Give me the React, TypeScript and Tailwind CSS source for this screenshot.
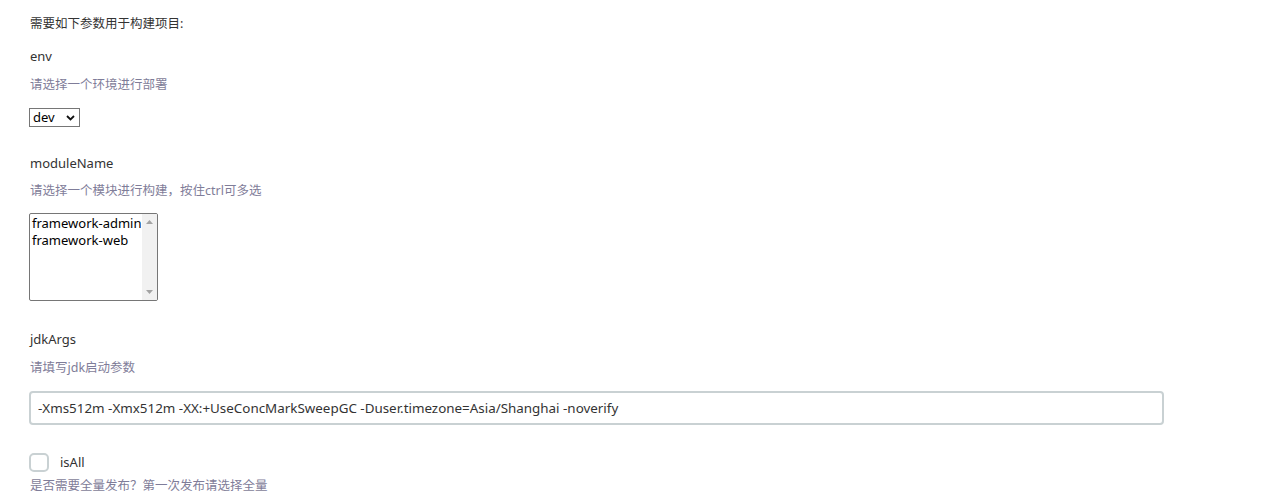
import { useState } from 'react';

const font = { fontFamily: '"Noto Sans", "Noto Sans CJK SC", sans-serif' };

export default function App() {
  const [isAll, setIsAll] = useState(false);

  return (
    <div className="min-h-[504px] bg-white pl-[30px] pt-[15px] text-[#333]" style={font}>
      <div className="text-[12.5px] leading-[18px]">需要如下参数用于构建项目:</div>

      {/* env */}
      <div className="mt-[13px] text-[13px] leading-[20px]">env</div>
      <div className="mt-[10px] text-[12.5px] leading-[18px] text-[#7f7d99]">请选择一个环境进行部署</div>
      <div className="mt-[14px] -ml-px flex h-[19px] w-[51px] items-center justify-between border border-[#767676] bg-white pl-[3px] pr-[4px] text-[13px] leading-none text-black">
        <span>dev</span>
        <svg width="9" height="6" viewBox="0 0 9 6" className="mt-px">
          <path d="M1 1l3.5 3.5L8 1" fill="none" stroke="#111" strokeWidth="1.8" />
        </svg>
      </div>

      {/* moduleName */}
      <div className="mt-[26px] text-[13px] leading-[20px]">moduleName</div>
      <div className="mt-[9px] text-[12.5px] leading-[18px] text-[#7f7d99]">请选择一个模块进行构建，按住ctrl可多选</div>
      <div className="mt-[13px] -ml-px flex h-[88px] w-[129px] overflow-hidden rounded-[2px] border border-[#767676] bg-white">
        <div className="flex-1 pl-[2px] pt-px text-[13px] leading-[17px] text-black">
          <div className="whitespace-nowrap">framework-admin</div>
          <div className="whitespace-nowrap">framework-web</div>
        </div>
        <div className="flex w-[16px] shrink-0 flex-col items-center justify-between bg-[#f1f1f1] py-[6px]">
          <svg width="7" height="4" viewBox="0 0 7 4">
            <path d="M0 4L3.5 0L7 4z" fill="#a3a3a3" />
          </svg>
          <svg width="7" height="4" viewBox="0 0 7 4">
            <path d="M0 0L3.5 4L7 0z" fill="#a3a3a3" />
          </svg>
        </div>
      </div>

      {/* jdkArgs */}
      <div className="mt-[28px] text-[13px] leading-[20px]">jdkArgs</div>
      <div className="mt-[10px] text-[12.5px] leading-[18px] text-[#7f7d99]">请填写jdk启动参数</div>
      <input
        className="mt-[14px] -ml-px block h-[34px] w-[1135px] rounded-[4px] border-2 border-[#c9d1d3] bg-white px-[7px] text-[13.4px] text-[#333] outline-none"
        style={font}
        defaultValue="-Xms512m -Xmx512m -XX:+UseConcMarkSweepGC -Duser.timezone=Asia/Shanghai -noverify"
      />

      {/* isAll */}
      <div className="mt-[27px] flex items-center">
        <button
          role="checkbox"
          aria-checked={isAll}
          onClick={() => setIsAll(!isAll)}
          className="-ml-px h-[19px] w-[20px] rounded-[5px] border-2 border-[#c9d1d3] bg-white"
        />
        <span className="ml-[11px] text-[13px] leading-[20px]">isAll</span>
      </div>
      <div className="mt-[5px] text-[12.5px] leading-[18px] text-[#7f7d99]">是否需要全量发布？第一次发布请选择全量</div>
    </div>
  );
}
